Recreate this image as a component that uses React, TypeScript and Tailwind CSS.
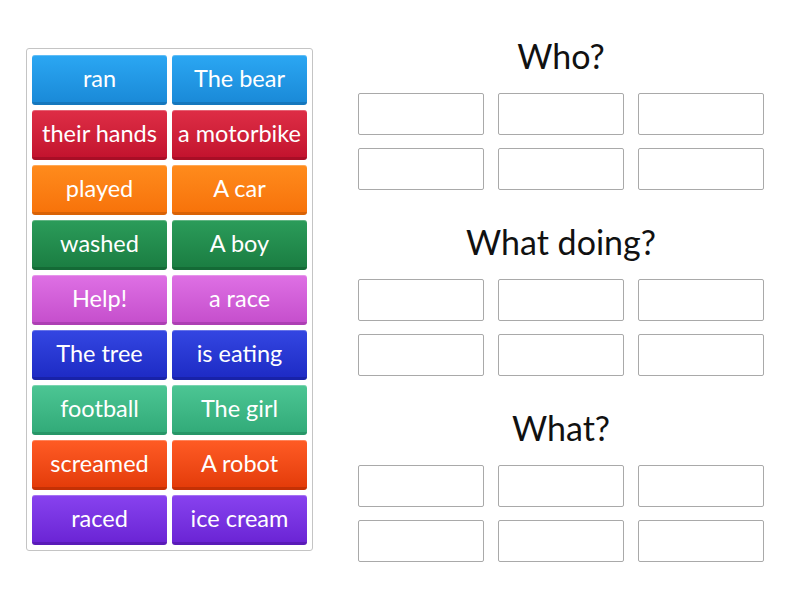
import React from 'react'

type Tile = { text: string; cls: string }

const rows: { cls: string; words: [string, string] }[] = [
  { cls: 'from-[#2ba7f3] to-[#1a8ad8] border-b-[#1577bd]', words: ['ran', 'The bear'] },
  { cls: 'from-[#de2d46] to-[#c3132e] border-b-[#a80e26]', words: ['their hands', 'a motorbike'] },
  { cls: 'from-[#ff8b1c] to-[#f7730a] border-b-[#d96205]', words: ['played', 'A car'] },
  { cls: 'from-[#2b9c5a] to-[#1b7e42] border-b-[#146a36]', words: ['washed', 'A boy'] },
  { cls: 'from-[#de70e4] to-[#c64fcd] border-b-[#ad3fb4]', words: ['Help!', 'a race'] },
  { cls: 'from-[#3446e2] to-[#1e2bc5] border-b-[#1822a8]', words: ['The tree', 'is eating'] },
  { cls: 'from-[#4cc694] to-[#32ab79] border-b-[#279667]', words: ['football', 'The girl'] },
  { cls: 'from-[#ff5b24] to-[#e43c09] border-b-[#c43105]', words: ['screamed', 'A robot'] },
  { cls: 'from-[#8842ef] to-[#6b24d5] border-b-[#5a1bb8]', words: ['raced', 'ice cream'] },
]

const sections = ['Who?', 'What doing?', 'What?']

function WordTile({ text, cls }: Tile) {
  return (
    <div
      className={`h-[50px] rounded-[3px] bg-gradient-to-b ${cls} border-b-[3px] shadow-[inset_0_1px_0_rgba(255,255,255,0.25)] flex items-center justify-center text-white text-[23.5px] leading-none whitespace-nowrap`}
    >
      {text}
    </div>
  )
}

export default function App() {
  return (
    <div
      className="w-[800px] h-[600px] bg-white flex items-start"
      style={{ fontFamily: 'Lato, "Open Sans", sans-serif' }}
    >
      {/* tiles */}
      <div className="ml-[26px] mt-[48px] w-[287px] border border-[#c4c4c4] rounded-[3px] px-[5px] pt-[6px] pb-[5px] grid grid-cols-2 gap-[5px]">
        {rows.flatMap((r) =>
          r.words.map((w) => <WordTile key={w} text={w} cls={r.cls} />)
        )}
      </div>

      {/* groups */}
      <div className="ml-[45px] mt-[34px] w-[406px] flex flex-col gap-[30px]">
        {sections.map((s) => (
          <div key={s}>
            <h2 className="h-[40px] text-center text-[34px] leading-[43px] text-[#111] mb-[19px]">{s}</h2>
            <div className="grid grid-cols-3 gap-x-[14px] gap-y-[13px]">
              {[...Array(6)].map((_, i) => (
                <div key={i} className="h-[42px] border border-[#a9a9a9] rounded-[2px]" />
              ))}
            </div>
          </div>
        ))}
      </div>
    </div>
  )
}
